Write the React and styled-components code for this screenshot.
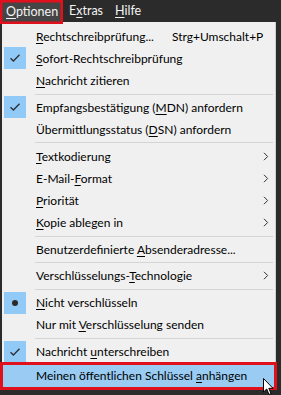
import React from "react";
import styled, { createGlobalStyle } from "styled-components";

const GlobalStyle = createGlobalStyle`
  html, body {
    margin: 0;
    padding: 0;
    background: #2b2b2b;
  }
  body {
    font-family: "Segoe UI", Lato, "Noto Sans", sans-serif;
    font-size: 12px;
  }
`;

const menuItems = [
  { label: ["", "R", "echtschreibprüfung..."], shortcut: "Strg+Umschalt+P" },
  { label: ["", "S", "ofort-Rechtschreibprüfung"], mark: "check" },
  { label: ["", "N", "achricht zitieren"] },
  { sep: true },
  { label: ["Empfangsbestätigung (", "M", "DN) anfordern"], mark: "check" },
  { label: ["Übermittlungsstatus (", "D", "SN) anfordern"] },
  { sep: true },
  { label: ["", "T", "extkodierung"], sub: true },
  { label: ["E-Mail-", "F", "ormat"], sub: true },
  { label: ["", "P", "riorität"], sub: true },
  { label: ["", "K", "opie ablegen in"], sub: true },
  { sep: true },
  { label: ["Benutzerdefinierte ", "A", "bsenderadresse..."] },
  { sep: true },
  { label: ["Verschlüsselungs-", "T", "echnologie"], sub: true },
  { sep: true },
  { label: ["", "N", "icht verschlüsseln"], mark: "dot" },
  { label: ["Nur mit ", "V", "erschlüsselung senden"] },
  { sep: true },
  { label: ["Nachricht ", "u", "nterschreiben"], mark: "check" },
  { label: ["Meinen öffentlichen Schlüssel ", "a", "nhängen"], hot: true },
];

export default function App() {
  return (
    <Screen>
      <GlobalStyle />
      <MenuBar>
        <MenuTitle $active>
          <u>O</u>ptionen
        </MenuTitle>
        <MenuTitle>
          E<u>x</u>tras
        </MenuTitle>
        <MenuTitle>
          <u>H</u>ilfe
        </MenuTitle>
      </MenuBar>
      <Panel>
        {menuItems.map((item, i) =>
          item.sep ? (
            <Separator key={i} />
          ) : (
            <Row key={i} $hot={item.hot}>
              <MarkCell $on={!!item.mark}>
                {item.mark === "check" && (
                  <svg width="12" height="10" viewBox="0 0 12 10">
                    <path
                      d="M1.5 5.2 L4.4 8 L10.5 1.8"
                      fill="none"
                      stroke="#2f2f2f"
                      strokeWidth="1.3"
                    />
                  </svg>
                )}
                {item.mark === "dot" && <Dot />}
              </MarkCell>
              <Label>
                {item.label[0]}
                <u>{item.label[1]}</u>
                {item.label[2]}
              </Label>
              <Shortcut>{item.shortcut}</Shortcut>
              <SubArrow>
                {item.sub && (
                  <svg width="6" height="9" viewBox="0 0 6 9">
                    <path
                      d="M1 0.8 L4.6 4.5 L1 8.2"
                      fill="none"
                      stroke="#333"
                      strokeWidth="1"
                    />
                  </svg>
                )}
              </SubArrow>
            </Row>
          )
        )}
        <Cursor width="11" height="18" viewBox="0 0 11 18">
          <path
            d="M0.5 0.5 L0.5 14 L3.7 11 L6 16.5 L8 15.6 L5.8 10.3 L10 10.3 Z"
            fill="#fff"
            stroke="#000"
            strokeWidth="1"
          />
        </Cursor>
      </Panel>
    </Screen>
  );
}

const Screen = styled.div`
  width: 281px;
  height: 395px;
  background: #2b2b2b;
  overflow: hidden;
`;

const MenuBar = styled.div`
  display: flex;
  height: 22px;
  background: #2b2b2b;
  color: #f4f4f4;
  font-size: 12.5px;
  position: relative;
  z-index: 2;
`;

const MenuTitle = styled.div`
  padding: 0 7px 0 6px;
  line-height: 22px;
  background: ${(p) => (p.$active ? "#454545" : "transparent")};
  box-shadow: ${(p) => (p.$active ? "inset 0 0 0 2.5px #e0101c" : "none")};
  height: ${(p) => (p.$active ? "24px" : "22px")};
  width: ${(p) => (p.$active ? "63px" : "auto")};
  box-sizing: border-box;
  padding-top: ${(p) => (p.$active ? "1px" : "0")};
  margin-right: ${(p) => (p.$active ? "0" : "-1px")};

  u {
    text-underline-offset: 2px;
  }
`;

const Panel = styled.div`
  position: relative;
  margin-left: 2px;
  width: 274px;
  box-sizing: border-box;
  background: #f0f0f0;
  border-right: 1px solid #cfcfcf;
  padding: 3px 0 3px 1px;
  color: #000;
`;

const Row = styled.div`
  display: grid;
  grid-template-columns: 33px 1fr auto 14px;
  align-items: center;
  height: 22.2px;
  margin: ${(p) => (p.$hot ? "2px 1px 0 0" : "0 1px 0 0")};
  background: ${(p) => (p.$hot ? "#99cbf3" : "transparent")};
  outline: ${(p) => (p.$hot ? "3px solid #e0101c" : "none")};
  outline-offset: 0;

  u {
    text-underline-offset: 2px;
  }
`;

const MarkCell = styled.div`
  width: 22px;
  height: 22px;
  margin-left: 1px;
  display: flex;
  align-items: center;
  justify-content: center;
  background: ${(p) => (p.$on ? "#91c9f7" : "transparent")};
`;

const Dot = styled.span`
  width: 6px;
  height: 6px;
  border-radius: 50%;
  background: #2a2a2a;
`;

const Label = styled.span`
  white-space: nowrap;
`;

const Shortcut = styled.span`
  padding-left: 18px;
  white-space: nowrap;
`;

const SubArrow = styled.span`
  display: flex;
  align-items: center;
  padding-left: 3px;
`;

const Separator = styled.div`
  height: 1px;
  background: #d5d5d5;
  margin: 2px 2px 1.5px 32px;
`;

const Cursor = styled.svg`
  position: absolute;
  right: 1px;
  bottom: -6px;
`;
